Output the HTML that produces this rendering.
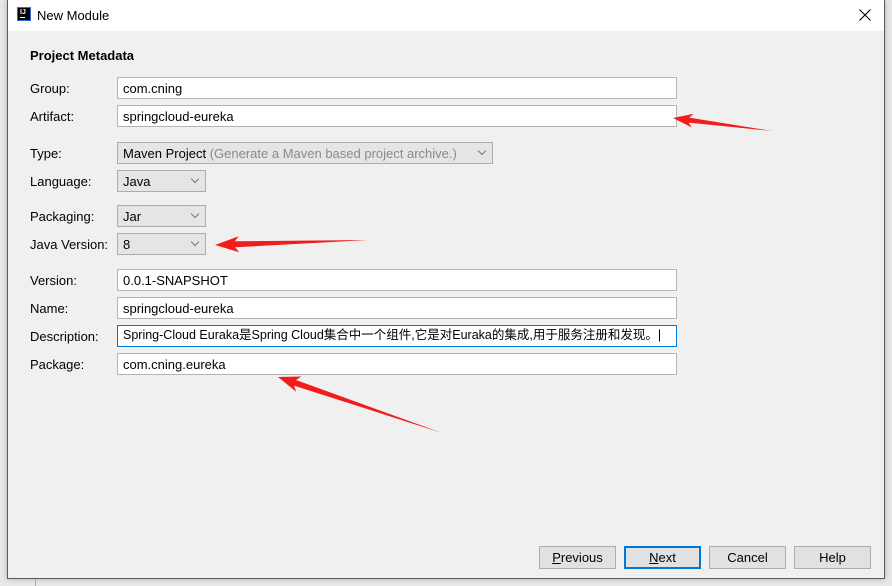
<!DOCTYPE html>
<html><head><meta charset="utf-8"><style>
*{margin:0;padding:0;box-sizing:border-box}
body{width:892px;height:586px;background:#e9e9e9;position:relative;overflow:hidden;font-family:"Liberation Sans","Noto Sans CJK SC",sans-serif;font-size:13px;line-height:15px;color:#000}
.win{position:absolute;left:7px;top:0;width:878px;height:579px;border:1px solid #5a5a5a;border-top:none;background:#f0f0f0;box-shadow:0 0 6px rgba(0,0,0,.25)}
.title{position:absolute;left:0;top:0;width:100%;height:31px;background:#fff}
.title .t{position:absolute;left:29px;top:8px;font-size:13px}
.icon{position:absolute;left:9px;top:7px;width:14px;height:14px;background:#000;border:1px solid #2a6fd6;color:#fff;font-size:7px;font-weight:bold;line-height:9px;padding-left:2px}
.icon i{position:absolute;left:2px;bottom:2px;width:5px;height:1px;background:#fff}
.abs{position:absolute}
.lbl{position:absolute;left:22px}
.f{position:absolute;left:109px;width:560px;height:22px;background:#fff;border:1px solid #b4b4b4;padding:3px 0 0 5px;white-space:nowrap;overflow:hidden}
.c{position:absolute;left:109px;height:22px;background:#e5e5e5;border:1px solid #adadad;padding:3px 0 0 5px;white-space:nowrap}
.c:after{content:"";position:absolute;right:7px;top:5px;width:5px;height:5px;border-right:1px solid #777;border-bottom:1px solid #777;transform:rotate(45deg)}
.b{position:absolute;top:546px;width:77px;height:23px;background:#e1e1e1;border:1px solid #adadad;text-align:center;padding-top:3px}
</style></head><body>
<div class="win">
<div class="title"><div class="icon">IJ<i></i></div><div class="t">New Module</div>
<svg class="abs" style="right:13px;top:9px" width="12" height="12"><path d="M0.5 0.5L11.5 11.5M11.5 0.5L0.5 11.5" stroke="#000" stroke-width="1.1"/></svg></div>
<div class="abs" style="left:22px;top:48px;font-weight:bold">Project Metadata</div>
<div class="lbl" style="top:81px">Group:</div><div class="f" style="top:77px">com.cning</div>
<div class="lbl" style="top:109px">Artifact:</div><div class="f" style="top:105px">springcloud-eureka</div>
<div class="lbl" style="top:146px">Type:</div><div class="c" style="top:142px;width:376px">Maven Project <span style="color:#8a8a8a">(Generate a Maven based project archive.)</span></div>
<div class="lbl" style="top:174px">Language:</div><div class="c" style="top:170px;width:89px">Java</div>
<div class="lbl" style="top:209px">Packaging:</div><div class="c" style="top:205px;width:89px">Jar</div>
<div class="lbl" style="top:237px">Java Version:</div><div class="c" style="top:233px;width:89px">8</div>
<div class="lbl" style="top:273px">Version:</div><div class="f" style="top:269px">0.0.1-SNAPSHOT</div>
<div class="lbl" style="top:301px">Name:</div><div class="f" style="top:297px">springcloud-eureka</div>
<div class="lbl" style="top:329px">Description:</div><div class="f" style="top:325px;border-color:#0078d7;font-size:12.5px;padding-top:2px">Spring-Cloud Euraka是Spring Cloud集合中一个组件,它是对Euraka的集成,用于服务注册和发现。|</div>
<div class="lbl" style="top:357px">Package:</div><div class="f" style="top:353px">com.cning.eureka</div>
<div class="b" style="left:531px"><u>P</u>revious</div>
<div class="b" style="left:616px;border:2px solid #0078d7;padding-top:2px"><u>N</u>ext</div>
<div class="b" style="left:701px">Cancel</div>
<div class="b" style="left:786px">Help</div>
</div>
<div class="abs" style="left:35px;top:579px;width:1px;height:7px;background:#aaa"></div>
<svg class="abs" style="left:0;top:0" width="892" height="586">
<g fill="#f21c1c">
<polygon points="673,118 693.7,113.7 689.2,117.6 772,131 688.6,122.6 691.9,127.5"/>
<polygon points="215,245 238.7,236.2 234.9,241.3 368,240 235.1,247.3 239.3,252.2"/>
<polygon points="278,377 301.4,376.5 296,380 442,433 294,385.6 296.2,391.7"/>
</g></svg>
</body></html>
